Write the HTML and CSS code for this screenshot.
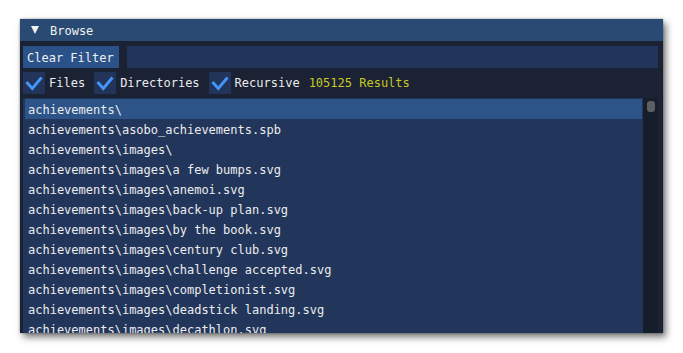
FILE: index.html
```html
<!DOCTYPE html>
<html>
<head>
<meta charset="utf-8">
<link rel="stylesheet" href="styles.css">
</head>
<body>
<div class="panel">
  <div class="titlebar"><span class="tri"></span><span class="title">Browse</span></div>
  <div class="content">
    <div class="filter-row">
      <div class="btn">Clear Filter</div>
      <div class="input"></div>
    </div>
    <div class="check-row">
      <span class="cb"><svg width="22" height="22" viewBox="0 0 22 22"><polyline points="3.5,10 9.3,16.5 18.5,5.5" fill="none" stroke="#4296fa" stroke-width="2.8"/></svg></span>
      <span class="lbl">Files</span>
      <span class="cb"><svg width="22" height="22" viewBox="0 0 22 22"><polyline points="3.5,10 9.3,16.5 18.5,5.5" fill="none" stroke="#4296fa" stroke-width="2.8"/></svg></span>
      <span class="lbl">Directories</span>
      <span class="cb"><svg width="22" height="22" viewBox="0 0 22 22"><polyline points="3.5,10 9.3,16.5 18.5,5.5" fill="none" stroke="#4296fa" stroke-width="2.8"/></svg></span>
      <span class="lbl">Recursive</span>
      <span class="results">105125 Results</span>
    </div>
    <div class="list-wrap">
      <div class="list">
        <div class="row sel">achievements\</div>
        <div class="row">achievements\asobo_achievements.spb</div>
        <div class="row">achievements\images\</div>
        <div class="row">achievements\images\a few bumps.svg</div>
        <div class="row">achievements\images\anemoi.svg</div>
        <div class="row">achievements\images\back-up plan.svg</div>
        <div class="row">achievements\images\by the book.svg</div>
        <div class="row">achievements\images\century club.svg</div>
        <div class="row">achievements\images\challenge accepted.svg</div>
        <div class="row">achievements\images\completionist.svg</div>
        <div class="row">achievements\images\deadstick landing.svg</div>
        <div class="row">achievements\images\decathlon.svg</div>
      </div>
      <div class="scroll"><div class="grab"></div></div>
    </div>
  </div>
</div>
</body>
</html>
```
FILE: styles.css
```css
html, body {
  margin: 0;
  padding: 0;
  background: #ffffff;
}
body {
  width: 683px;
  height: 353px;
  overflow: hidden;
  font-family: "DejaVu Sans Mono", "Liberation Mono", monospace;
  font-size: 12px;
  color: #ececee;
}
.panel {
  margin: 19px 0 0 20px;
  width: 643px;
  height: 314px;
  background: #1a2233;
  display: flex;
  flex-direction: column;
  overflow: hidden;
  box-shadow: 3px 4px 7px rgba(0, 0, 0, 0.55), 0 0 2px rgba(0, 0, 0, 0.35);
}
.titlebar {
  height: 22px;
  flex: none;
  background: #294a73;
  display: flex;
  align-items: center;
  padding-left: 11px;
}
.tri {
  width: 0;
  height: 0;
  border-left: 4.5px solid transparent;
  border-right: 4.5px solid transparent;
  border-top: 8px solid #f2f2f2;
  margin-right: 11px;
}
.title {
  color: #f2f2f2;
  line-height: 22px;
  padding-top: 2px;
}
.content {
  flex: 1;
  display: flex;
  flex-direction: column;
  padding: 5px 5px 0 3px;
  min-height: 0;
}
.filter-row {
  display: flex;
  height: 22px;
  gap: 8px;
  flex: none;
}
.btn {
  width: 96px;
  background: #2a5288;
  line-height: 20px;
  padding: 2px 0 0 4px;
  box-sizing: border-box;
  color: #f0f0f0;
}
.input {
  flex: 1;
  background: #223459;
}
.check-row {
  margin-top: 4px;
  height: 22px;
  display: flex;
  align-items: center;
  flex: none;
}
.cb {
  width: 22px;
  height: 22px;
  background: #223459;
  display: block;
}
.cb svg {
  display: block;
}
.lbl {
  margin-left: 4px;
  margin-right: 9px;
  line-height: 22px;
}
.results {
  color: #c9c922;
  line-height: 22px;
}
.list-wrap {
  margin-top: 4px;
  flex: 1;
  display: flex;
  min-height: 0;
}
.list {
  flex: 1;
  background: #22365b;
  padding: 1px 1px 0 2px;
  overflow: hidden;
}
.row {
  height: 20px;
  box-sizing: border-box;
  padding: 3px 0 0 3px;
  line-height: 17px;
  white-space: nowrap;
}
.row.sel {
  background: #2c5488;
}
.scroll {
  width: 15px;
  flex: none;
  background: #161d2b;
}
.grab {
  margin: 3px 0 0 4px;
  width: 8px;
  height: 11px;
  border-radius: 3px;
  background: #5b5e63;
}
```
